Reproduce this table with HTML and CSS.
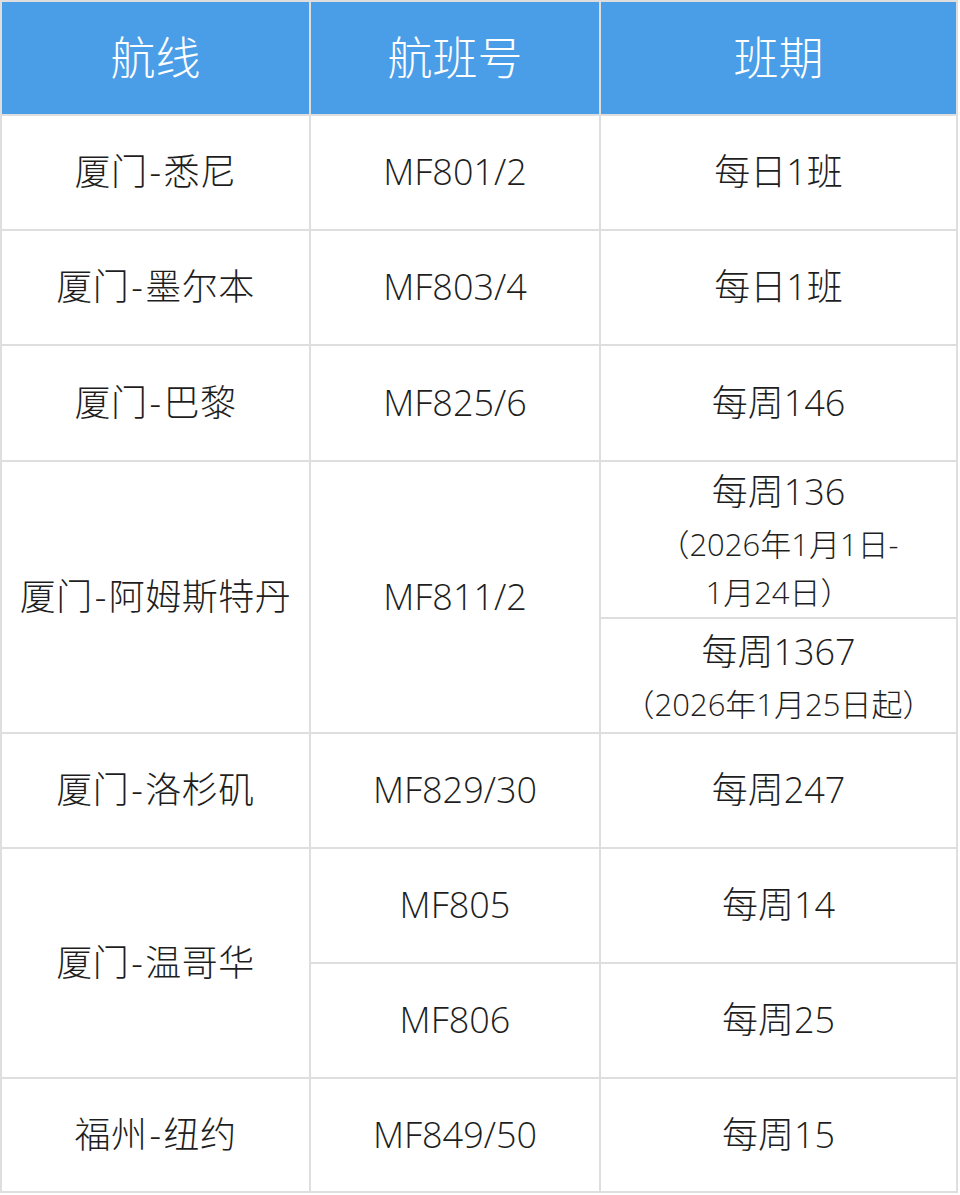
FILE: index.html
```html
<!DOCTYPE html>
<html lang="zh-CN">
<head>
<meta charset="utf-8">
<title>航线班期</title>
<link rel="stylesheet" href="styles.css">
</head>
<body>
<div class="table">
  <div class="cell head">航线</div>
  <div class="cell head">航班号</div>
  <div class="cell head">班期</div>

  <div class="cell route">厦门<span class="dash">-</span>悉尼</div>
  <div class="cell">MF801/2</div>
  <div class="cell">每日1班</div>

  <div class="cell route">厦门<span class="dash">-</span>墨尔本</div>
  <div class="cell">MF803/4</div>
  <div class="cell">每日1班</div>

  <div class="cell route">厦门<span class="dash">-</span>巴黎</div>
  <div class="cell">MF825/6</div>
  <div class="cell">每周146</div>

  <div class="cell route span2">厦门<span class="dash">-</span>阿姆斯特丹</div>
  <div class="cell span2">MF811/2</div>
  <div class="cell stack">
    <div class="main">每周136</div>
    <div class="note">（2026年1月1日-<br>1月24日）</div>
  </div>
  <div class="cell stack">
    <div class="main">每周1367</div>
    <div class="note">（2026年1月25日起）</div>
  </div>

  <div class="cell route">厦门<span class="dash">-</span>洛杉矶</div>
  <div class="cell">MF829/30</div>
  <div class="cell">每周247</div>

  <div class="cell route span2">厦门<span class="dash">-</span>温哥华</div>
  <div class="cell">MF805</div>
  <div class="cell">每周14</div>
  <div class="cell">MF806</div>
  <div class="cell">每周25</div>

  <div class="cell route">福州<span class="dash">-</span>纽约</div>
  <div class="cell">MF849/50</div>
  <div class="cell">每周15</div>
</div>
</body>
</html>
```

FILE: styles.css
```css
html, body {
  margin: 0;
  padding: 0;
  background: #ffffff;
}

body {
  font-family: "Open Sans", "Noto Sans CJK SC", sans-serif;
  font-weight: 300;
  color: #1e1e1e;
}

.table {
  display: grid;
  width: fit-content;
  grid-template-columns: 307px 288px 355px;
  grid-template-rows: 112px 113px 113px 114px 155px 113px 113px 113px 113px 112px;
  gap: 2px;
  padding: 2px;
  background: #dedede;
}

.cell {
  background: #ffffff;
  display: flex;
  align-items: center;
  justify-content: center;
  text-align: center;
  font-size: 36px;
  line-height: 1.3;
  white-space: nowrap;
}

.route {
  letter-spacing: 0.5px;
}

.dash {
  padding: 0 2px;
}

.head {
  background: #4a9ee8;
  color: #ffffff;
  font-size: 45px;
}

.span2 {
  grid-row: span 2;
}

.stack {
  flex-direction: column;
}

.main {
  font-size: 36px;
  line-height: 56px;
}

.note {
  font-size: 31px;
  line-height: 48px;
  text-spacing-trim: space-all;
}
```
